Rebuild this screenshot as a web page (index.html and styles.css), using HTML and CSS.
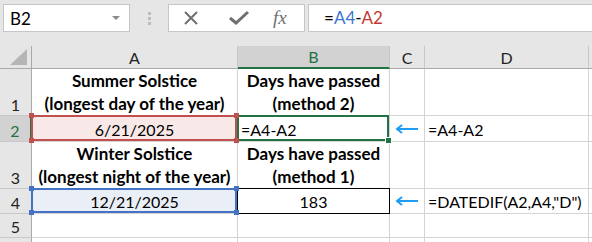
FILE: index.html
```html
<!DOCTYPE html>
<html lang="en">
<head>
    <meta charset="UTF-8">
    <title>Days between solstices</title>
    <link rel="stylesheet" href="styles.css">
</head>
<body>

    <div class="toolbar">
        <div class="namebox">
            <span>B2</span>
            <svg class="caret" width="8" height="5" viewBox="0 0 8 5"><path d="M0 0h8L4 4z" fill="#8a8a8a"/></svg>
        </div>
        <div class="grip"><i></i><i></i><i></i></div>
        <div class="fbuttons">
            <svg width="16" height="16" viewBox="0 0 16 16"><path d="M2 2L14 14M14 2L2 14" stroke="#6f6f6f" stroke-width="2"/></svg>
            <svg width="20" height="16" viewBox="0 0 20 16"><path d="M1 8L7 13L19 2" stroke="#6f6f6f" stroke-width="3" fill="none"/></svg>
            <span class="fx">fx</span>
        </div>
        <div class="formula">=<span class="blue">A4</span>-<span class="red">A2</span></div>
    </div>

    <div class="sheet">
        <div class="hd corner"><svg width="17" height="16" viewBox="0 0 17 16"><path d="M0 16H17V0z" fill="#b5b5b5"/></svg></div>
        <div class="hd col">A</div>
        <div class="hd col sel">B</div>
        <div class="hd col">C</div>
        <div class="hd col">D</div>
        <div class="hd col"></div>

        <div class="hd row">1</div>
        <div class="cell title">Summer Solstice<br>(longest day of the year)</div>
        <div class="cell title">Days have passed<br>(method 2)</div>
        <div class="cell"></div>
        <div class="cell"></div>
        <div class="cell"></div>

        <div class="hd row sel">2</div>
        <div class="cell center ref red-ref">6/21/2025<i class="k tl"></i><i class="k tr"></i><i class="k bl"></i><i class="k br"></i></div>
        <div class="cell active">=A4-A2<i class="k br"></i></div>
        <div class="cell arrow"><svg width="24" height="10" viewBox="0 0 24 10"><path d="M2 5H23M7 1L2 5L7 9" stroke="#1e9df2" stroke-width="2" fill="none"/></svg></div>
        <div class="cell">=A4-A2</div>
        <div class="cell"></div>

        <div class="hd row">3</div>
        <div class="cell title">Winter Solstice<br>(longest night of the year)</div>
        <div class="cell title">Days have passed<br>(method 1)</div>
        <div class="cell"></div>
        <div class="cell"></div>
        <div class="cell"></div>

        <div class="hd row">4</div>
        <div class="cell center ref blue-ref">12/21/2025<i class="k tl"></i><i class="k tr"></i><i class="k bl"></i><i class="k br"></i></div>
        <div class="cell center boxed">183</div>
        <div class="cell arrow"><svg width="24" height="10" viewBox="0 0 24 10"><path d="M2 5H23M7 1L2 5L7 9" stroke="#1e9df2" stroke-width="2" fill="none"/></svg></div>
        <div class="cell">=DATEDIF(A2,A4,"D")</div>
        <div class="cell"></div>

        <div class="hd row">5</div>
        <div class="cell"></div>
        <div class="cell"></div>
        <div class="cell"></div>
        <div class="cell"></div>
        <div class="cell"></div>

        <div class="hd row"></div>
        <div class="cell"></div>
        <div class="cell"></div>
        <div class="cell"></div>
        <div class="cell"></div>
        <div class="cell"></div>
    </div>

</body>
</html>
```

FILE: styles.css
```css
body { margin: 0; background: #fff; font-family: Lato, "Open Sans", sans-serif; color: #000; overflow: hidden; }

.toolbar { display: flex; align-items: flex-start; height: 46px; box-sizing: border-box; padding: 4px 0 0 3px; background: #e6e6e6; }
.namebox { width: 127px; height: 28px; box-sizing: border-box; background: #fff; border: 1px solid #c6c6c6; display: flex; align-items: center; justify-content: space-between; padding: 0 9px 0 6px; font-size: 17px; }
.grip { width: 38px; height: 28px; display: flex; flex-direction: column; align-items: center; justify-content: center; gap: 2px; }
.grip i { width: 3px; height: 3px; background: #bdbdbd; }
.fbuttons { width: 137px; height: 28px; box-sizing: border-box; background: #fff; border: 1px solid #c6c6c6; display: flex; align-items: center; gap: 0; padding-left: 14px; }
.fbuttons svg:first-child { margin-right: 30px; }
.fbuttons svg:nth-child(2) { margin-right: 24px; }
.fx { font-family: "Liberation Serif", serif; font-style: italic; font-size: 19px; color: #6f6f6f; }
.formula { flex: 1; margin-left: 3px; height: 28px; box-sizing: border-box; background: #fff; border: 1px solid #c6c6c6; border-right: none; padding-left: 15px; font-size: 17px; line-height: 26px; }
.formula .blue { color: #3b73d1; }
.formula .red { color: #c1392f; }

.sheet { display: grid; grid-template-columns: 32px 206px 152px 35px 164px 1fr; grid-template-rows: 23px 47px 26px 47px 25px 24px 24px; }
.hd { background: #e6e6e6; box-sizing: border-box; font-size: 16px; color: #222; display: flex; justify-content: center; }
.col { border-right: 1px solid #c8c8c8; border-bottom: 1px solid #a9a9a9; align-items: center; }
.col.sel { background: #d2d2d2; color: #217346; border-bottom: 2px solid #217346; }
.corner { border-right: 1px solid #a9a9a9; border-bottom: 1px solid #a9a9a9; align-items: flex-end; justify-content: flex-end; padding: 0 4px 3px 0; }
.row { border-right: 1px solid #a9a9a9; border-bottom: 1px solid #c8c8c8; align-items: flex-end; padding-bottom: 1px; }
.row.sel { background: #d2d2d2; color: #217346; border-right: 2px solid #217346; }

.cell { box-sizing: border-box; border-right: 1px solid #d4d4d4; border-bottom: 1px solid #d4d4d4; font-size: 16px; line-height: 23px; padding: 0 3px; display: flex; align-items: flex-end; position: relative; white-space: nowrap; }
.title { font-weight: bold; font-size: 17px; text-align: center; justify-content: center; line-height: 23px; }
.center { justify-content: center; }
.arrow { align-items: center; justify-content: center; padding: 0; }
.boxed { border: 1px solid #000; margin: -1px 0 0 -1px; }

.ref::before, .active::before { content: ""; position: absolute; top: -1px; left: -1px; right: 0; bottom: 0; border: 2px solid; }
.red-ref { background: #f8e8e8; }
.red-ref::before { border-color: #c0504d; }
.blue-ref { background: #eaeef7; }
.blue-ref::before { border-color: #4472c4; }
.active::before { border-color: #217346; }

.k { position: absolute; width: 5px; height: 5px; z-index: 2; }
.red-ref .k { background: #c0504d; }
.blue-ref .k { background: #4472c4; }
.active .k { background: #217346; border: 1px solid #fff; }
.tl { top: -3px; left: -3px; }
.tr { top: -3px; right: -2px; }
.bl { bottom: -2px; left: -3px; }
.br { bottom: -2px; right: -2px; }
.active .br { bottom: -3px; right: -3px; }
```
